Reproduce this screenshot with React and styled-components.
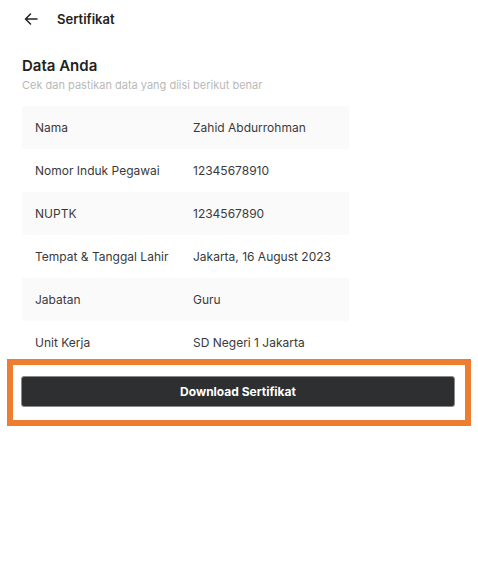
import styled, { createGlobalStyle } from "styled-components";

const rows = [
  ["Nama", "Zahid Abdurrohman"],
  ["Nomor Induk Pegawai", "12345678910"],
  ["NUPTK", "1234567890"],
  ["Tempat & Tanggal Lahir", "Jakarta, 16 August 2023"],
  ["Jabatan", "Guru"],
  ["Unit Kerja", "SD Negeri 1 Jakarta"],
];

const App = () => {
  return (
    <>
      <GlobalStyle />
      <Header>
        <BackButton aria-label="Kembali">
          <svg width="14" height="12" viewBox="0 0 14 12" fill="none">
            <path
              d="M13 6H1.5M6.5 1 1.5 6l5 5"
              stroke="#222"
              strokeWidth="1.5"
              strokeLinecap="round"
              strokeLinejoin="round"
            />
          </svg>
        </BackButton>
        <HeaderTitle>Sertifikat</HeaderTitle>
      </Header>
      <Content>
        <Title>Data Anda</Title>
        <Subtitle>Cek dan pastikan data yang diisi berikut benar</Subtitle>
        <Table>
          {rows.map(([label, value], i) => (
            <Row key={label} $striped={i % 2 === 0}>
              <Label>{label}</Label>
              <Value>{value}</Value>
            </Row>
          ))}
        </Table>
      </Content>
      <ButtonArea>
        <DownloadButton>Download Sertifikat</DownloadButton>
        <Highlight />
      </ButtonArea>
    </>
  );
};

export default App;

const GlobalStyle = createGlobalStyle`
  body {
    margin: 0;
    background: #ffffff;
    font-family: Inter, "Noto Sans", sans-serif;
    color: #222;
  }
`;

const Header = styled.div`
  display: flex;
  align-items: center;
  gap: 19px;
  height: 37px;
  padding: 0 24px;
`;

const BackButton = styled.button`
  display: flex;
  align-items: center;
  padding: 0;
  border: none;
  background: none;
  cursor: pointer;
`;

const HeaderTitle = styled.span`
  font-size: 13px;
  font-weight: 600;
  color: #222;
`;

const Content = styled.div`
  padding: 0 22px;
`;

const Title = styled.h2`
  margin: 19px 0 0;
  font-size: 15px;
  line-height: 20px;
  font-weight: 600;
  color: #222;
`;

const Subtitle = styled.p`
  margin: 1px 0 0;
  font-size: 11px;
  line-height: 16px;
  color: #b9b9b9;
`;

const Table = styled.div`
  width: 327px;
  margin-top: 13px;
`;

const Row = styled.div`
  display: flex;
  align-items: center;
  height: 43px;
  background: ${(p) => (p.$striped ? "#fafafa" : "#ffffff")};
  font-size: 12px;
  color: #3a3a3a;
`;

const Label = styled.span`
  width: 158px;
  padding-left: 13px;
`;

const Value = styled.span`
  flex: 1;
`;

const ButtonArea = styled.div`
  position: relative;
  padding: 12px 23px 19px 21px;
`;

const Highlight = styled.div`
  position: absolute;
  left: 7px;
  top: -5px;
  width: 464px;
  height: 67px;
  box-sizing: border-box;
  border: 6px solid #ed7d31;
  pointer-events: none;
`;

const DownloadButton = styled.button`
  display: block;
  width: 100%;
  height: 31px;
  border: 1px solid #8a8a8a;
  border-radius: 3px;
  background: #2e2f31;
  color: #ffffff;
  font-family: Inter, "Noto Sans", sans-serif;
  font-size: 12px;
  font-weight: 700;
  cursor: pointer;
`;
